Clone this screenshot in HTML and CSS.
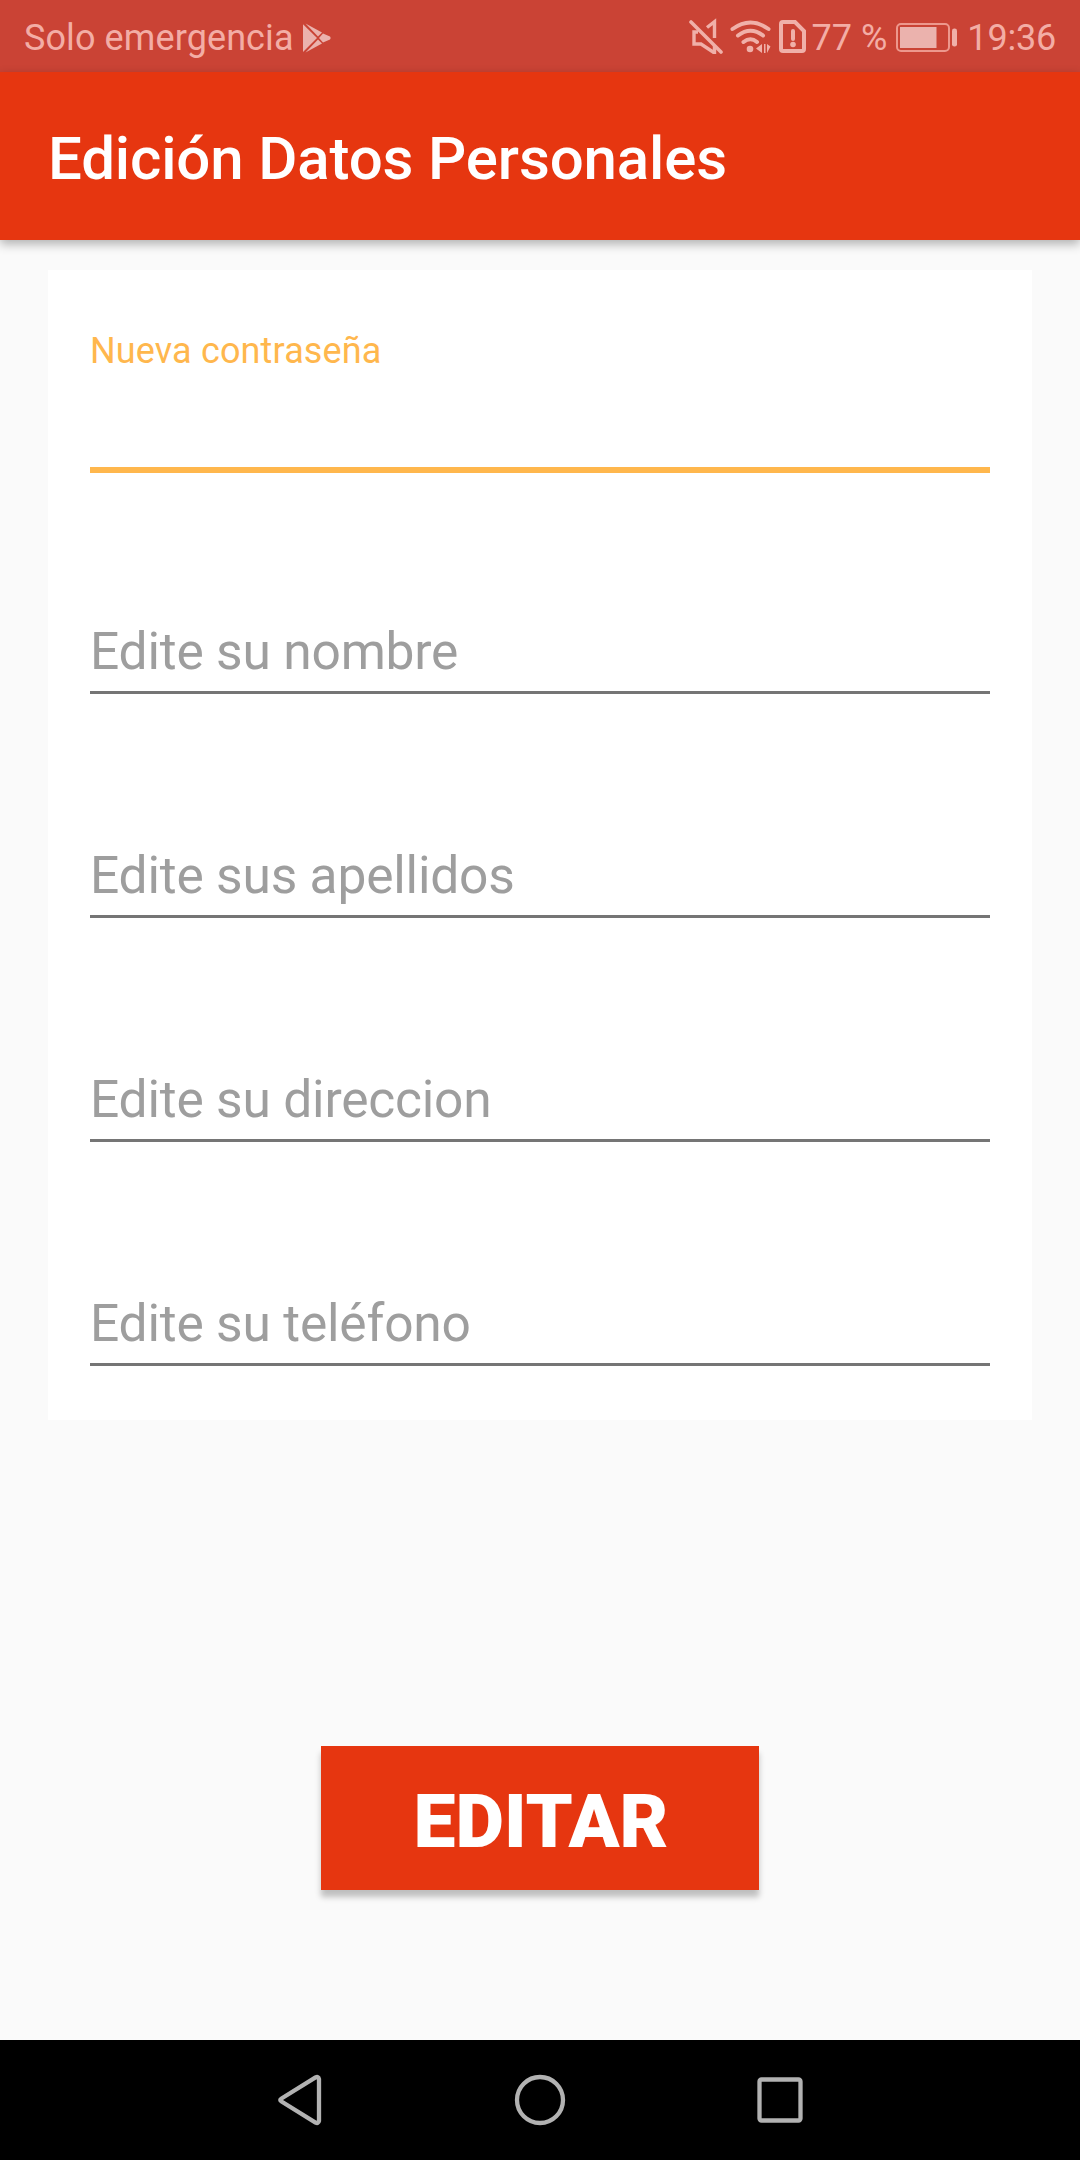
FILE: index.html
```html
<!DOCTYPE html>
<html lang="es">
<head>
<meta charset="utf-8">
<title>Edición Datos Personales</title>
<link rel="stylesheet" href="styles.css">
</head>
<body>
<div class="status">
  <span class="carrier">Solo emergencia</span>
  <svg class="play" width="28" height="30" viewBox="0 0 28 30">
    <path d="M0 1.200L14 15L0 29Z" fill="#ebb2ad"/>
    <path d="M2.500 0.500L19 9.500L15 13.500ZM2.500 29.500L19 20.500L15 16.500ZM20 10.500L27 13.500Q28.200 15 27 16.500L20 19.500L16 15Z" fill="#ebb2ad"/>
  </svg>
  <svg class="icons" width="120" height="36" viewBox="0 0 120 36" fill="none" stroke="#f0b0a9" stroke-width="4">
    <path d="M2 4L32 34" stroke-linecap="round" stroke-width="3.600"/>
    <path d="M18 9.500L25.500 3.700V20M9 14H5V26H12L25.500 35V28" stroke-width="3.400"/>
    <path d="M43.500 11Q61.500 -2 79.500 11M49 17.500Q61.500 8 74 17.500M54.500 24Q61.500 18.500 68 24" stroke-linecap="round"/>
    <circle cx="61" cy="31" r="3.300" fill="#f0b0a9" stroke="none"/>
    <path d="M73 26V35L67 30.500ZM75 26H76.500V35H75ZM78 26V35L81.500 28.500Z" fill="#f0b0a9" stroke="none"/>
    <path d="M94 4H106L115 13V31Q115 33 113 33H94Q92 33 92 31V6Q92 4 94 4Z"/>
    <path d="M104 13V21" stroke-linecap="round"/>
    <circle cx="104" cy="26.500" r="2.800" fill="#f0b0a9" stroke="none"/>
  </svg>
  <span class="percent">77 %</span>
  <svg class="battery" width="62" height="30" viewBox="0 0 62 30">
    <rect x="1" y="1" width="52" height="27" rx="4" fill="none" stroke="#ed988d" stroke-width="2"/>
    <rect x="4" y="4" width="36.500" height="21" fill="#ebb2ad"/>
    <rect x="56" y="5.500" width="5" height="18" rx="2.300" fill="#f0b0a9"/>
  </svg>
  <span class="time">19:36</span>
</div>
<header class="appbar"><h1 class="title">Edición Datos Personales</h1></header>
<main class="content">
  <form class="card">
    <div class="field focused"><span class="label">Nueva contraseña</span></div>
    <div class="field">Edite su nombre</div>
    <div class="field">Edite sus apellidos</div>
    <div class="field">Edite su direccion</div>
    <div class="field">Edite su teléfono</div>
  </form>
  <button class="submit" type="button">EDITAR</button>
</main>
<nav class="navbar">
  <svg width="240" height="120" viewBox="0 0 240 120"><path d="M139 39V81Q138.500 84 135.500 82.500L101.500 61.500Q99 60 101.500 58.500L135.500 37.500Q138.500 36 139 39Z"/></svg>
  <svg width="240" height="120" viewBox="0 0 240 120"><circle cx="120" cy="60" r="23"/></svg>
  <svg width="240" height="120" viewBox="0 0 240 120"><rect x="99.500" y="39.500" width="41" height="41" rx="2"/></svg>
</nav>
</body>
</html>
```
FILE: styles.css
```css
* { box-sizing: border-box; }
body {
  margin: 0;
  width: 1080px;
  height: 2160px;
  display: flex;
  flex-direction: column;
  background: #fafafa;
  font-family: Roboto, sans-serif;
}
.status {
  height: 72px;
  padding: 3px 24px 0 24px;
  display: flex;
  align-items: center;
  flex: none;
  background: #ca4335;
  color: #f3ada5;
  font-size: 36px;
  line-height: 42px;
  white-space: nowrap;
}
.carrier { letter-spacing: .1px; }
.play { margin-left: 9px; }
.icons { margin-left: auto; margin-top: -3px; }
.percent { margin-left: 3px; }
.battery { margin: 0 9px 0 9px; }
.time { letter-spacing: -.2px; }
.appbar {
  height: 168px;
  flex: none;
  display: flex;
  align-items: center;
  padding: 5px 48px 0;
  background: #e63610;
  box-shadow: 0 4px 10px rgba(0, 0, 0, .3);
}
.title {
  margin: 0;
  font-size: 60px;
  font-weight: 500;
  letter-spacing: -.14px;
  color: #fff;
}
.content {
  flex: 1;
  display: flex;
  flex-direction: column;
  align-items: center;
  padding-top: 30px;
}
.card {
  width: 984px;
  height: 1150px;
  padding: 0 42px;
  background: #fff;
}
.field {
  height: 224px;
  display: flex;
  align-items: flex-end;
  padding-bottom: 9px;
  border-bottom: 3px solid #757575;
  color: #9e9e9e;
  font-size: 51.5px;
  line-height: 60px;
  letter-spacing: -.2px;
}
.focused {
  height: 203px;
  margin-bottom: -3px;
  padding-bottom: 95px;
  border-bottom: 6px solid #ffb74d;
  color: #ffb74d;
}
.label {
  font-size: 36px;
  line-height: 42px;
  letter-spacing: .14px;
}
.submit {
  width: 438px;
  height: 144px;
  margin-top: 326px;
  padding: 5px 0 0 2px;
  border: 0;
  background: #e63610;
  box-shadow: 0 7px 6px rgba(0, 0, 0, .24);
  color: #fff;
  font: 900 75px/88px Roboto, sans-serif;
}
.navbar {
  height: 120px;
  flex: none;
  display: flex;
  justify-content: center;
  background: #000;
}
.navbar svg {
  fill: none;
  stroke: #b2b2b2;
  stroke-width: 4.3;
}
```
